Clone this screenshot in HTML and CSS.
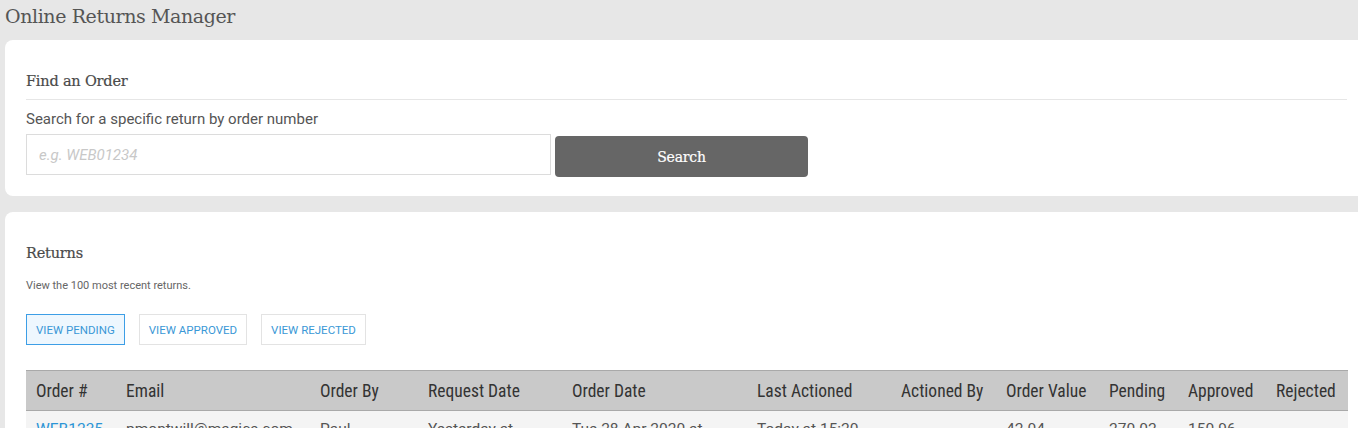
FILE: index.html
```html
<!DOCTYPE html>
<html>
<head>
    <meta charset="utf-8">
    <title>Online Returns Manager</title>
    <link rel="stylesheet" href="styles.css">
</head>
<body>
    <h1 class="page-title">Online Returns Manager</h1>

    <div class="card">
        <h2 class="card-title ruled">Find an Order</h2>
        <label class="field-label" for="order-no">Search for a specific return by order number</label>
        <div class="search-row">
            <input id="order-no" class="search-input" type="text" placeholder="e.g. WEB01234">
            <button class="search-btn">Search</button>
        </div>
    </div>

    <div class="card card-returns">
        <h2 class="card-title">Returns</h2>
        <p class="note">View the 100 most recent returns.</p>
        <div class="filters">
            <button class="filter active">View Pending</button>
            <button class="filter">View Approved</button>
            <button class="filter">View Rejected</button>
        </div>
        <table class="returns">
            <thead>
                <tr>
                    <th class="c-order">Order #</th>
                    <th class="c-email">Email</th>
                    <th class="c-by">Order By</th>
                    <th class="c-req">Request Date</th>
                    <th class="c-date">Order Date</th>
                    <th class="c-last">Last Actioned</th>
                    <th class="c-actby">Actioned By</th>
                    <th class="c-value">Order Value</th>
                    <th class="c-pend">Pending</th>
                    <th class="c-appr">Approved</th>
                    <th class="c-rej">Rejected</th>
                </tr>
            </thead>
            <tbody>
                <tr>
                    <td><a href="#">WEB1235</a></td>
                    <td>pmontwill@magics.com</td>
                    <td>Paul</td>
                    <td>Yesterday at</td>
                    <td>Tue 28 Apr 2020 at</td>
                    <td>Today at 15:20</td>
                    <td></td>
                    <td>42.04</td>
                    <td>270.02</td>
                    <td>150.96</td>
                    <td></td>
                </tr>
            </tbody>
        </table>
    </div>
</body>
</html>
```

FILE: styles.css
```css
html, body {
    overflow: hidden;
}
body {
    margin: 0;
    background: #e7e7e7;
    font-family: Roboto, "Liberation Sans", sans-serif;
    color: #555;
}
.page-title {
    margin: 0;
    padding: 5px 5px 0;
    height: 40px;
    box-sizing: border-box;
    font-family: "DejaVu Serif", serif;
    font-size: 19px;
    font-weight: normal;
    letter-spacing: -0.4px;
    color: #555;
}
.card {
    background: #fff;
    border-radius: 8px;
    margin: 0 -10px 16px 5px;
    padding: 33px 21px 19px;
}
.card-returns {
    padding-top: 33px;
}
.card-title {
    margin: 0;
    font-family: "DejaVu Serif", serif;
    font-size: 14.5px;
    font-weight: normal;
    letter-spacing: -0.2px;
    color: #4a4a4a;
    -webkit-text-stroke: 0.2px #4a4a4a;
}
.ruled {
    padding-bottom: 10px;
    border-bottom: 1px solid #e6e6e6;
}
.field-label {
    display: block;
    margin: 10px 0 6px;
    font-size: 15px;
    color: #555;
}
.search-row {
    display: flex;
    align-items: flex-start;
    gap: 4px;
}
.search-input {
    width: 525px;
    height: 41px;
    box-sizing: border-box;
    border: 1px solid #dcdcdc;
    padding: 0 12px;
    font-family: Roboto, sans-serif;
    font-size: 15px;
    outline: none;
}
.search-input::placeholder {
    color: #c8c8c8;
    font-style: italic;
}
.search-btn {
    margin-top: 2px;
    width: 253px;
    height: 41px;
    border: none;
    border-radius: 4px;
    background: #666;
    color: #fff;
    font-family: "DejaVu Serif", serif;
    font-size: 14px;
    letter-spacing: -0.2px;
    -webkit-text-stroke: 0.2px #fff;
}
.note {
    margin: 18px 0 22px;
    font-size: 11px;
    color: #666;
}
.filters {
    display: flex;
    gap: 14px;
    margin-bottom: 25px;
}
.filter {
    height: 31px;
    padding: 0 9px;
    border: 1px solid #e3e3e3;
    background: #fff;
    color: #3a98d6;
    font-family: Roboto, sans-serif;
    font-size: 11.5px;
    text-transform: uppercase;
}
.filter.active {
    border-color: #3d9ee6;
    background: #eef7fe;
}
.returns {
    width: 100%;
    border-collapse: collapse;
    table-layout: fixed;
}
.returns th,
.returns td {
    box-sizing: border-box;
}
.returns th {
    height: 40px;
    padding: 0 10px;
    text-align: left;
    font-family: "Roboto Condensed", "Liberation Sans Narrow", Roboto, sans-serif;
    font-stretch: condensed;
    font-size: 17.5px;
    font-weight: normal;
    color: #333;
    background: #c9c9c9;
    border-top: 1px solid #a9a9a9;
    border-bottom: 1px solid #a9a9a9;
    white-space: nowrap;
}
.returns td {
    padding: 9px 10px;
    font-size: 15.5px;
    color: #555;
    background: #f4f4f4;
    vertical-align: top;
    white-space: nowrap;
    overflow: hidden;
}
.returns a {
    color: #2b95d6;
    text-decoration: none;
}
.c-order { width: 90px; }
.c-email { width: 194px; }
.c-by { width: 108px; }
.c-req { width: 144px; }
.c-date { width: 185px; }
.c-last { width: 144px; }
.c-actby { width: 105px; }
.c-value { width: 103px; }
.c-pend { width: 79px; }
.c-appr { width: 88px; }
.c-rej { width: 82px; }
```
